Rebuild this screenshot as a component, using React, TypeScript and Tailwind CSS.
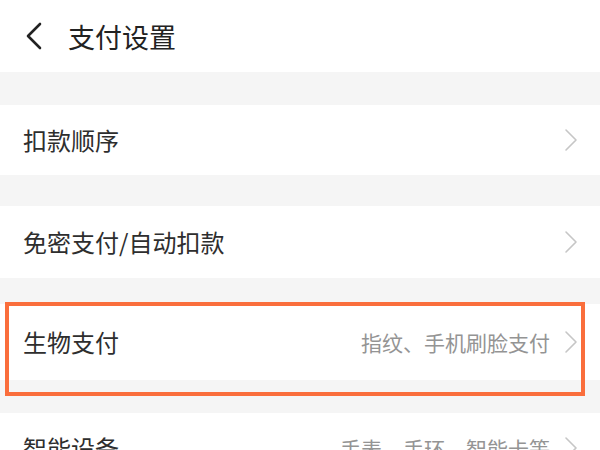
import React from 'react';

interface RowProps {
    title: string;
    hint?: string;
    heightClass: string;
}

const Chevron: React.FC = () => (
    <svg width="14" height="24" viewBox="0 0 14 24" fill="none" className="ml-[14px] shrink-0">
        <polyline points="2,2 12,12 2,22" stroke="#c6c6c6" strokeWidth="1.6" strokeLinecap="round" strokeLinejoin="round" />
    </svg>
);

const Row: React.FC<RowProps> = ({ title, hint, heightClass }) => (
    <div className={`flex items-center justify-between bg-white pl-[23px] pr-[22px] ${heightClass}`}>
        <span className="text-[24px] text-[#2e2e2e] leading-none">{title}</span>
        <div className="flex items-center">
            {hint && <span className="text-[21px] text-[#949494] leading-none">{hint}</span>}
            <Chevron />
        </div>
    </div>
);

export default function App() {
    return (
        <div
            className="relative w-[600px] h-[450px] overflow-hidden bg-[#f5f5f5]"
            style={{ fontFamily: '"Noto Sans CJK SC", "Noto Sans", sans-serif' }}
        >
            <div className="flex items-center h-[72px] bg-white pl-[24px]">
                <svg width="20" height="30" viewBox="0 0 20 30" fill="none">
                    <polyline points="16,3 4,15 16,27" stroke="#222222" strokeWidth="2.6" strokeLinecap="round" strokeLinejoin="round" />
                </svg>
                <span className="ml-[24px] text-[27px] text-[#222222] leading-none">支付设置</span>
            </div>

            <div className="h-[33px]" />
            <Row title="扣款顺序" heightClass="h-[70px]" />
            <div className="h-[31px]" />
            <Row title="免密支付/自动扣款" heightClass="h-[72px]" />
            <div className="h-[26px]" />
            <Row title="生物支付" hint="指纹、手机刷脸支付" heightClass="h-[76px]" />
            <div className="h-[33px]" />
            <Row title="智能设备" hint="手表、手环、智能卡等" heightClass="h-[70px]" />

            <div className="absolute left-[5px] top-[302px] w-[580px] h-[94px] border-[4px] border-[#fa6e3c]" />
        </div>
    );
}
